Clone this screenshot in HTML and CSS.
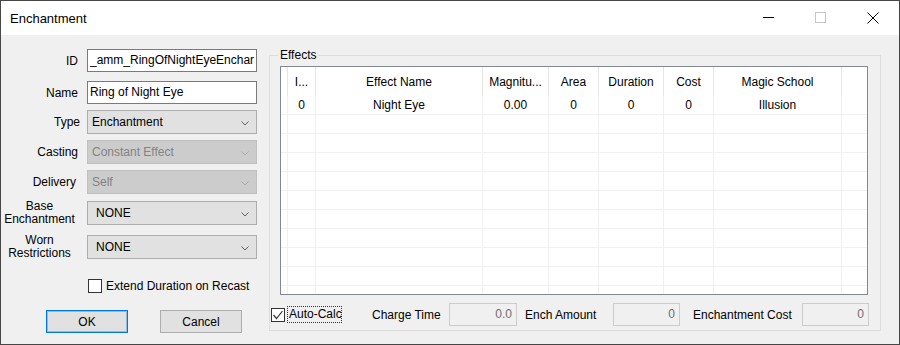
FILE: index.html
```html
<!DOCTYPE html>
<html>
<head>
<meta charset="utf-8">
<link rel="stylesheet" href="styles.css">
</head>
<body>
<div class="window">
  <div class="titlebar">
    <div class="title">Enchantment</div>
    <div class="caption">
      <div class="cbtn"><svg width="12" height="12" viewBox="0 0 12 12"><line x1="0" y1="5.5" x2="11" y2="5.5" stroke="#000" stroke-width="1"/></svg></div>
      <div class="cbtn"><svg width="12" height="12" viewBox="0 0 12 12"><rect x="0.5" y="0.5" width="10" height="10" fill="none" stroke="#c6c6c6" stroke-width="1"/></svg></div>
      <div class="cbtn"><svg width="12" height="12" viewBox="0 0 12 12"><path d="M0.5 0.5 L11.5 11.5 M11.5 0.5 L0.5 11.5" stroke="#000" stroke-width="1" fill="none"/></svg></div>
    </div>
  </div>
  <div class="client">
    <div class="left">
      <div class="row r-id"><div class="lbl">ID</div><div class="text">_amm_RingOfNightEyeEnchar</div></div>
      <div class="row r-name"><div class="lbl">Name</div><div class="text">Ring of Night Eye</div></div>
      <div class="row r-type"><div class="lbl lbl-type">Type</div><div class="combo"><span>Enchantment</span><svg class="chev" width="8" height="5" viewBox="0 0 8 5"><polyline points="0.5,0.5 4,4 7.5,0.5" fill="none" stroke="#606060" stroke-width="1"/></svg></div></div>
      <div class="row r-cast"><div class="lbl">Casting</div><div class="combo dis"><span>Constant Effect</span><svg class="chev" width="8" height="5" viewBox="0 0 8 5"><polyline points="0.5,0.5 4,4 7.5,0.5" fill="none" stroke="#acacac" stroke-width="1"/></svg></div></div>
      <div class="row r-deliv"><div class="lbl lbl-deliv">Delivery</div><div class="combo dis"><span>Self</span><svg class="chev" width="8" height="5" viewBox="0 0 8 5"><polyline points="0.5,0.5 4,4 7.5,0.5" fill="none" stroke="#acacac" stroke-width="1"/></svg></div></div>
      <div class="row r-base"><div class="lbl lbl2">Base<br>Enchantment</div><div class="combo none"><span>NONE</span><svg class="chev" width="8" height="5" viewBox="0 0 8 5"><polyline points="0.5,0.5 4,4 7.5,0.5" fill="none" stroke="#606060" stroke-width="1"/></svg></div></div>
      <div class="row r-worn"><div class="lbl lbl2">Worn<br>Restrictions</div><div class="combo none"><span>NONE</span><svg class="chev" width="8" height="5" viewBox="0 0 8 5"><polyline points="0.5,0.5 4,4 7.5,0.5" fill="none" stroke="#606060" stroke-width="1"/></svg></div></div>
      <div class="row r-check"><div class="cb"></div><span class="cb-text">Extend Duration on Recast</span></div>
      <div class="row r-btns"><div class="btn default">OK</div><div class="btn">Cancel</div></div>
    </div>
    <div class="group">
      <div class="legend">Effects</div>
      <div class="lv">
        <div class="lv-head"><div></div><div>I...</div><div>Effect Name</div><div>Magnitu...</div><div>Area</div><div>Duration</div><div>Cost</div><div>Magic School</div><div></div></div>
        <div class="lv-row"><div></div><div>0</div><div>Night Eye</div><div>0.00</div><div>0</div><div>0</div><div>0</div><div>Illusion</div><div></div></div>
        <div class="lv-row"><div></div><div></div><div></div><div></div><div></div><div></div><div></div><div></div><div></div></div>
        <div class="lv-row"><div></div><div></div><div></div><div></div><div></div><div></div><div></div><div></div><div></div></div>
        <div class="lv-row"><div></div><div></div><div></div><div></div><div></div><div></div><div></div><div></div><div></div></div>
        <div class="lv-row"><div></div><div></div><div></div><div></div><div></div><div></div><div></div><div></div><div></div></div>
        <div class="lv-row"><div></div><div></div><div></div><div></div><div></div><div></div><div></div><div></div><div></div></div>
        <div class="lv-row"><div></div><div></div><div></div><div></div><div></div><div></div><div></div><div></div><div></div></div>
        <div class="lv-row"><div></div><div></div><div></div><div></div><div></div><div></div><div></div><div></div><div></div></div>
        <div class="lv-row"><div></div><div></div><div></div><div></div><div></div><div></div><div></div><div></div><div></div></div>
        <div class="lv-row"><div></div><div></div><div></div><div></div><div></div><div></div><div></div><div></div><div></div></div>
        <div class="lv-row"><div></div><div></div><div></div><div></div><div></div><div></div><div></div><div></div><div></div></div>
      </div>
      <div class="bottom">
        <div class="cb checked"><svg width="12" height="12" viewBox="0 0 12 12"><polyline points="1.5,6 4.5,9.5 10.5,2" fill="none" stroke="#333" stroke-width="1.2"/></svg></div>
        <div class="focus">Auto-Calc</div>
        <div class="blbl l-charge">Charge Time</div>
        <div class="num w68">0.0</div>
        <div class="blbl l-ench">Ench Amount</div>
        <div class="num w67">0</div>
        <div class="blbl l-cost">Enchantment Cost</div>
        <div class="num w67">0</div>
      </div>
    </div>
  </div>
</div>
</body>
</html>
```
FILE: styles.css
```css
html, body {
  margin: 0;
  padding: 0;
}
body {
  background: #f0f0f0;
  font-family: "Liberation Sans", Arial, sans-serif;
  font-size: 12px;
  color: #000;
}
.window {
  width: 900px;
  height: 345px;
  box-sizing: border-box;
  border: 1px solid #464646;
  background: #f0f0f0;
  display: flex;
  flex-direction: column;
  overflow: hidden;
}
.titlebar {
  height: 34px;
  flex: none;
  background: #fff;
  display: flex;
  align-items: center;
}
.title {
  flex: 1;
  font-size: 13px;
  padding-left: 9px;
}
.caption {
  display: flex;
  height: 100%;
}
.cbtn {
  width: 52px;
  height: 100%;
  display: flex;
  align-items: center;
  justify-content: center;
}
.cbtn svg { display: block; }

.client {
  flex: 1;
  display: flex;
}
.left {
  width: 268px;
  flex: none;
  box-sizing: border-box;
  padding-top: 14px;
  display: flex;
  flex-direction: column;
}
.row {
  display: flex;
  align-items: center;
}
.lbl {
  width: 77px;
  margin-right: 9px;
  text-align: right;
  white-space: nowrap;
}
.lbl-type { width: 79px; margin-right: 7px; }
.lbl-deliv { width: 75px; margin-right: 11px; }
.lbl2 {
  text-align: center;
  line-height: 13px;
}
.r-id { height: 23px; margin-bottom: 9px; }
.r-name { height: 23px; margin-bottom: 6px; }
.r-type { height: 24px; margin-bottom: 6px; }
.r-cast { height: 24px; margin-bottom: 6px; }
.r-deliv { height: 24px; margin-bottom: 7px; }
.r-base { height: 24px; margin-bottom: 10px; }
.r-worn { height: 24px; margin-bottom: 20px; }
.r-check { height: 14px; margin-bottom: 17px; padding-left: 87px; }
.r-btns { height: 23px; padding-left: 45px; gap: 32px; }

.text {
  width: 170px;
  height: 23px;
  box-sizing: border-box;
  border: 1px solid #7a7a7a;
  background: #fff;
  padding-left: 2px;
  line-height: 21px;
  white-space: nowrap;
  overflow: hidden;
}
.combo {
  width: 170px;
  height: 24px;
  box-sizing: border-box;
  border: 1px solid #adadad;
  background: #e1e1e1;
  display: flex;
  align-items: center;
  padding-left: 4px;
  white-space: nowrap;
}
.combo.dis {
  background: #cccccc;
  border-color: #bfbfbf;
  color: #838383;
}
.combo.none { padding-left: 8px; }
.chev {
  margin-left: auto;
  margin-right: 7px;
  margin-top: 2px;
  display: block;
}
.cb {
  width: 14px;
  height: 14px;
  box-sizing: border-box;
  border: 1px solid #333;
  background: #fff;
  flex: none;
}
.cb svg { display: block; margin: 0; }
.cb-text { margin-left: 4px; }
.btn {
  width: 82px;
  height: 23px;
  box-sizing: border-box;
  border: 1px solid #adadad;
  background: #e1e1e1;
  display: flex;
  align-items: center;
  justify-content: center;
}
.btn.default {
  border-color: #0078d7;
  box-shadow: inset 0 0 0 1px rgba(0, 120, 215, 0.35);
}

.group {
  width: 612px;
  height: 276px;
  margin-top: 20px;
  box-sizing: border-box;
  border: 1px solid #dcdcdc;
  padding: 10px 10px 4px 1px;
  position: relative;
}
.legend {
  position: absolute;
  top: -8px;
  left: 8px;
  padding: 0 2px;
  line-height: 14px;
  background: #f0f0f0;
}
.lv {
  width: 588px;
  height: 229px;
  margin-left: 9px;
  box-sizing: border-box;
  border: 1px solid #828790;
  background: #fff;
  overflow: hidden;
}
.lv-head, .lv-row {
  display: grid;
  grid-template-columns: 7px 28px 167px 66px 50px 65px 50px 128px 1fr;
}
.lv-head { height: 29px; }
.lv-head > div {
  box-sizing: border-box;
  border-right: 1px solid #e5e5e5;
  display: flex;
  align-items: center;
  justify-content: center;
  white-space: nowrap;
  overflow: hidden;
}
.lv-row { height: 19px; }
.lv-row > div {
  box-sizing: border-box;
  border-right: 1px solid #f0f0f0;
  border-bottom: 1px solid #f0f0f0;
  line-height: 18px;
  text-align: center;
  white-space: nowrap;
  overflow: hidden;
}
.lv-head > div:last-child,
.lv-row > div:last-child { border-right: none; }

.bottom {
  margin-top: 8px;
  height: 23px;
  display: flex;
  align-items: center;
}
.bottom > * { flex-shrink: 0; }
.focus {
  margin-left: 2px;
  width: 55px;
  height: 17px;
  box-sizing: border-box;
  border: 1px dotted #333;
  padding-left: 1px;
  line-height: 15px;
  white-space: nowrap;
}
.blbl { white-space: nowrap; }
.l-charge { margin-left: 30px; width: 77px; }
.l-ench { margin-left: 8px; width: 88px; }
.l-cost { margin-left: 13px; width: 109px; }
.num {
  height: 23px;
  box-sizing: border-box;
  border: 1px solid #cccccc;
  text-align: right;
  padding-right: 4px;
  line-height: 21px;
  color: #6d6d6d;
}
.w68 { width: 68px; }
.w67 { width: 67px; }
```
